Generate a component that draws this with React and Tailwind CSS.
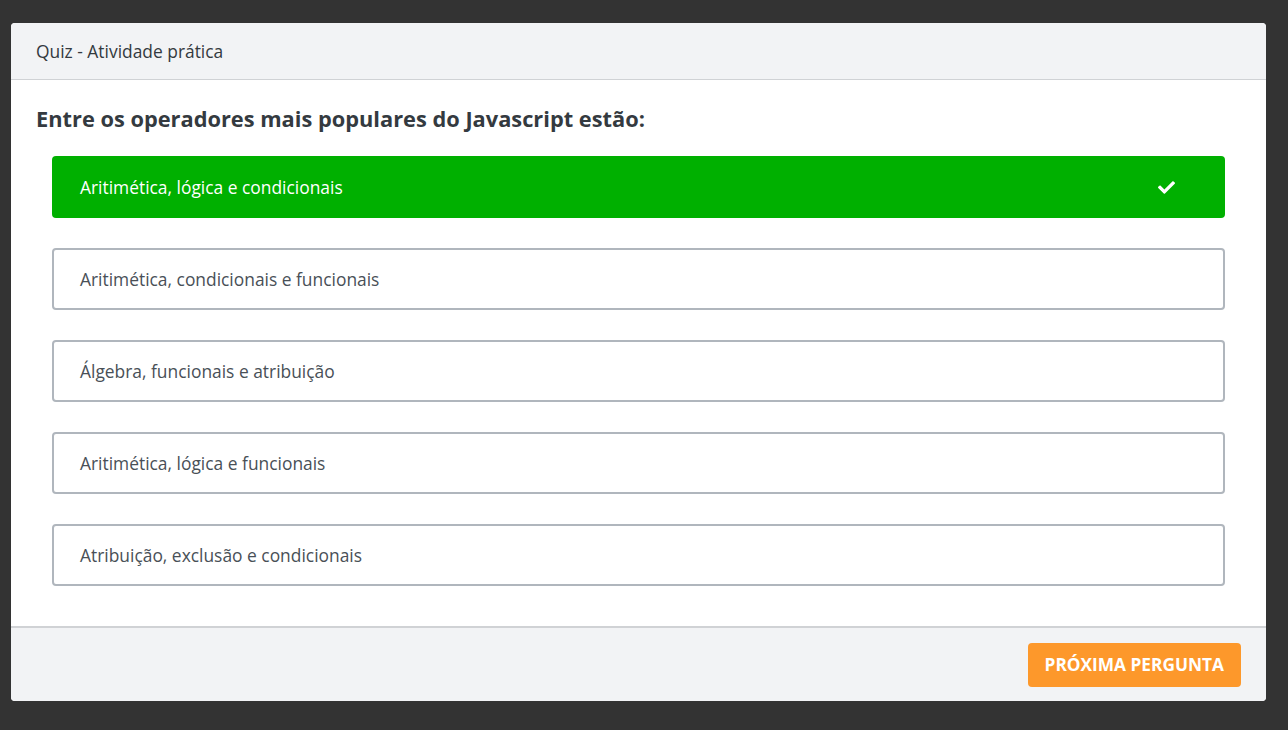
import React from "react";

const options = [
  "Aritimética, lógica e condicionais",
  "Aritimética, condicionais e funcionais",
  "Álgebra, funcionais e atribuição",
  "Aritimética, lógica e funcionais",
  "Atribuição, exclusão e condicionais",
];

function CheckIcon() {
  return (
    <svg viewBox="0 0 512 512" className="w-[17px] h-[17px]" fill="white">
      <path d="M173.898 439.404l-166.4-166.4c-9.997-9.997-9.997-26.206 0-36.204l36.203-36.204c9.997-9.998 26.207-9.998 36.204 0L192 312.69 432.095 72.596c9.997-9.997 26.207-9.997 36.204 0l36.203 36.204c9.997 9.997 9.997 26.206 0 36.204l-294.4 294.401c-9.998 9.997-26.207 9.997-36.204-.001z" />
    </svg>
  );
}

function App() {
  const correct = 0;

  return (
    <div
      className="w-[1288px] h-[730px] bg-[#333333] pt-[23px] pl-[11px]"
      style={{ fontFamily: '"Open Sans", "Noto Sans", sans-serif' }}
    >
      <div className="w-[1255px] h-[678px] bg-white rounded-[4px] overflow-hidden flex flex-col">
        {/* Header */}
        <div className="h-[57px] bg-[#f2f3f5] border-b border-[#d0d2d5] flex items-center px-[25px]">
          <span className="text-[17.4px] text-[#343a40]">Quiz - Atividade prática</span>
        </div>

        {/* Body */}
        <div className="flex-1 px-[25px] pt-[24px]">
          <h2 className="text-[21.8px] leading-[30px] font-bold text-[#343a40] mb-[22px]">
            Entre os operadores mais populares do Javascript estão:
          </h2>
          <div className="flex flex-col gap-[30px] px-[16px]">
            {options.map((opt, i) =>
              i === correct ? (
                <div
                  key={i}
                  className="h-[62px] rounded-[4px] bg-[#00b000] flex items-center justify-between pl-[28px] pr-[50px]"
                >
                  <span className="text-[17.4px] font-medium text-white">{opt}</span>
                  <CheckIcon />
                </div>
              ) : (
                <div
                  key={i}
                  className="h-[62px] rounded-[4px] border-2 border-[#b0b6bd] bg-white flex items-center pl-[26px]"
                >
                  <span className="text-[17.4px] text-[#495057]">{opt}</span>
                </div>
              )
            )}
          </div>
        </div>

        {/* Footer */}
        <div className="h-[75px] bg-[#f2f3f5] border-t-2 border-[#d0d2d5] flex items-center justify-end px-[25px]">
          <button className="h-[44px] px-[17px] rounded-[4px] bg-[#fd982b] text-white font-bold text-[17.3px] uppercase">
            Próxima pergunta
          </button>
        </div>
      </div>
    </div>
  );
}

export default App;
